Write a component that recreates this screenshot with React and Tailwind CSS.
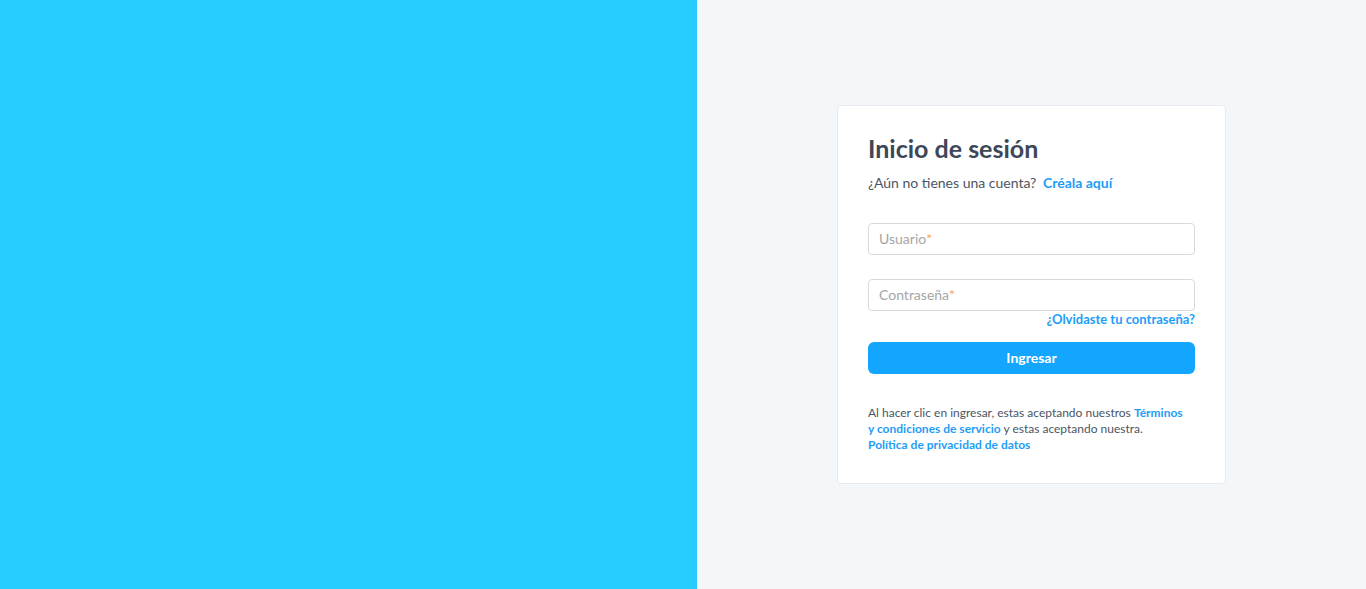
export default function App() {
  return (
    <div
      className="flex h-[589px] w-full"
      style={{ fontFamily: "Lato, 'Noto Sans', sans-serif" }}
    >
      <div className="w-[697px] shrink-0 bg-[#26cbff]" />
      <div className="flex flex-1 items-center justify-center bg-[#f4f7f9]">
        <div className="w-[389px] rounded border border-[#e6eaee] bg-white px-[30px] pt-[26px] pb-[30px]">
          <h1 className="text-[25px] leading-[32px] font-bold text-[#3d4757]">
            Inicio de sesión
          </h1>
          <p className="mt-[9px] text-[14px] leading-[20px] text-[#4b5563]">
            ¿Aún no tienes una cuenta?{" "}
            <a href="#" className="ml-[3px] font-bold text-[#1e9df7]">
              Créala aquí
            </a>
          </p>

          <div className="mt-[30px] flex h-[32px] items-center rounded border border-[#d9d9d9] px-[10px] pb-px text-[14px] text-[#a6a6a6]">
            Usuario<span className="text-[#f7a35c]">*</span>
          </div>

          <div className="mt-[24px] flex h-[32px] items-center rounded border border-[#d9d9d9] px-[10px] pb-px text-[14px] text-[#a6a6a6]">
            Contraseña<span className="text-[#f7a35c]">*</span>
          </div>
          <div className="text-right text-[13px] leading-[16px] font-bold text-[#1e9df7]">
            ¿Olvidaste tu contraseña?
          </div>

          <button className="mt-[15px] flex h-[32px] w-full items-center justify-center rounded-md bg-[#14a5fe] pb-px text-[14px] font-bold text-white">
            Ingresar
          </button>

          <p className="mt-[31px] text-[12px] leading-[16px] text-[#4b5563]">
            Al hacer clic en ingresar, estas aceptando nuestros{" "}
            <a href="#" className="font-bold text-[#1e9df7]">
              Términos
              <br />y condiciones de servicio
            </a>{" "}
            y estas aceptando nuestra.
            <br />
            <a href="#" className="font-bold text-[#1e9df7]">
              Política de privacidad de datos
            </a>
          </p>
        </div>
      </div>
    </div>
  );
}
